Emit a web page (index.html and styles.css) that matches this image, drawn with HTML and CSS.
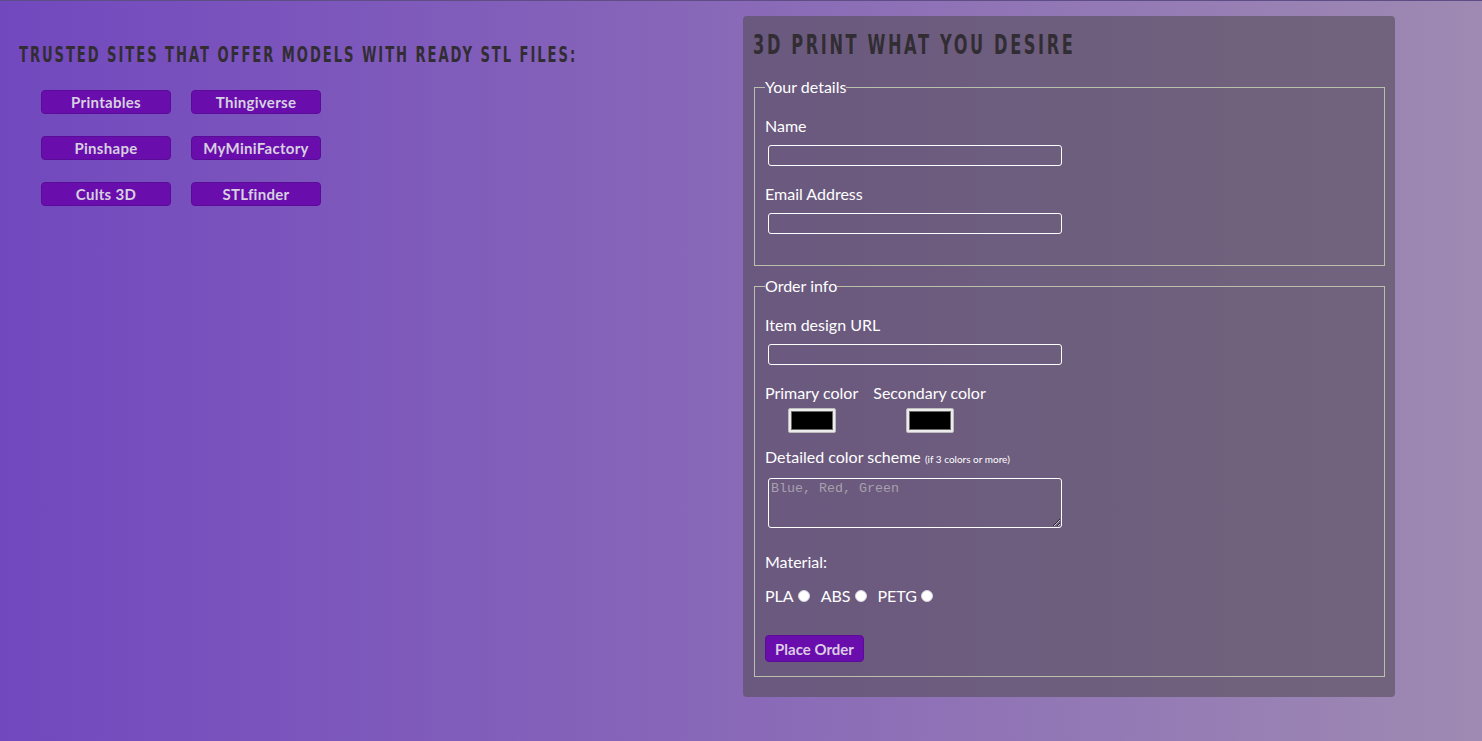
FILE: index.html
```html
<!DOCTYPE html>
<html lang="en">
<head>
<meta charset="utf-8">
<title>3D Print What You Desire</title>
<link rel="stylesheet" href="styles.css">
</head>
<body>
  <main class="page">
    <section class="sites">
      <h2 class="sites-title">Trusted sites that offer models with ready STL files:</h2>
      <nav class="site-grid">
        <a class="site-btn" href="#">Printables</a>
        <a class="site-btn" href="#">Thingiverse</a>
        <a class="site-btn" href="#">Pinshape</a>
        <a class="site-btn" href="#">MyMiniFactory</a>
        <a class="site-btn" href="#">Cults 3D</a>
        <a class="site-btn" href="#">STLfinder</a>
      </nav>
    </section>
    <section class="order-wrap">
      <form class="panel">
        <h1 class="panel-title">3D Print what you desire</h1>
        <fieldset class="group group-details">
          <legend>Your details</legend>
          <label class="lbl" for="name">Name</label>
          <input class="txt" id="name" type="text">
          <label class="lbl" for="email">Email Address</label>
          <input class="txt" id="email" type="email">
        </fieldset>
        <fieldset class="group group-order">
          <legend>Order info</legend>
          <label class="lbl" for="url">Item design URL</label>
          <input class="txt" id="url" type="url">
          <div class="colors">
            <div class="color-col">
              <label class="lbl-inline" for="c1">Primary color</label>
              <input class="swatch" id="c1" type="color" value="#000000">
            </div>
            <div class="color-col">
              <label class="lbl-inline" for="c2">Secondary color</label>
              <input class="swatch" id="c2" type="color" value="#000000">
            </div>
          </div>
          <label class="lbl lbl-scheme" for="scheme">Detailed color scheme <small class="hint">(if 3 colors or more)</small></label>
          <textarea class="area" id="scheme" placeholder="Blue, Red, Green"></textarea>
          <div class="lbl lbl-material">Material:</div>
          <div class="radios">
            <label class="radio">PLA <input type="radio" name="mat" class="dot"></label>
            <label class="radio">ABS <input type="radio" name="mat" class="dot"></label>
            <label class="radio">PETG <input type="radio" name="mat" class="dot"></label>
          </div>
          <button type="button" class="submit">Place Order</button>
        </fieldset>
      </form>
    </section>
  </main>
</body>
</html>
```
FILE: styles.css
```css
html, body {
  margin: 0;
  padding: 0;
}
body {
  min-height: 100vh;
  background: linear-gradient(to right, #7248bf 0%, #8969b8 50%, #9e8ab2 100%);
  border-top: 1px solid #5f4d86;
  box-sizing: border-box;
  font-family: Lato, "Open Sans", sans-serif;
  color: #ffffff;
}
.page {
  display: flex;
}
.sites {
  width: 741px;
  flex: none;
  padding-left: 19px;
  box-sizing: border-box;
}
.sites-title {
  margin: 40px 0 0;
  font-family: "DejaVu Sans", sans-serif;
  font-weight: bold;
  font-size: 22px;
  line-height: 28px;
  letter-spacing: 3.25px;
  text-transform: uppercase;
  color: #312d33;
  white-space: nowrap;
  transform: scaleX(0.597);
  transform-origin: left center;
}
.site-grid {
  display: grid;
  grid-template-columns: 130px 130px;
  column-gap: 20px;
  row-gap: 22px;
  margin: 21px 0 0 22px;
}
.site-btn {
  display: block;
  height: 24px;
  box-sizing: border-box;
  line-height: 22px;
  text-align: center;
  background: #6a0dad;
  border: 1px solid #5a0c98;
  border-radius: 4px;
  color: #d6d0e0;
  font-weight: bold;
  font-size: 15px;
  letter-spacing: 0.3px;
  text-decoration: none;
}
.order-wrap {
  padding-top: 15px;
  padding-left: 2px;
}
.panel {
  width: 652px;
  box-sizing: border-box;
  padding: 11px 10px 20px 11px;
  background: rgba(89, 79, 94, 0.63);
  border-radius: 4px;
}
.panel-title {
  margin: 0 0 14px -1px;
  font-family: "DejaVu Sans", sans-serif;
  font-weight: bold;
  font-size: 27px;
  line-height: 36px;
  letter-spacing: 4.35px;
  text-transform: uppercase;
  color: #312d33;
  white-space: nowrap;
  transform: scaleX(0.6);
  transform-origin: left center;
}
.group {
  margin: 0;
  padding: 0 10px;
  border: 1px solid #b9c0ab;
  min-width: 0;
}
.group legend {
  padding: 0;
  font-size: 16px;
  line-height: 20px;
}
.group-details {
  padding-bottom: 31px;
}
.group-order {
  margin-top: 10px;
  padding-bottom: 14px;
}
.lbl {
  display: block;
  margin-top: 19px;
  font-size: 16px;
  line-height: 20px;
}
.txt + .lbl {
  margin-top: 18px;
}
.txt {
  display: block;
  margin: 9px 0 0 3px;
  width: 294px;
  height: 21px;
  box-sizing: border-box;
  background: transparent;
  border: 1px solid #ffffff;
  border-radius: 3px;
  color: #fff;
  padding: 1px 3px;
}
.colors {
  display: flex;
  gap: 15px;
  margin-top: 18px;
}
.color-col {
  display: flex;
  flex-direction: column;
  align-items: center;
}
.lbl-inline {
  font-size: 16px;
  line-height: 20px;
}
.swatch {
  margin: 5px 0 0;
  width: 48px;
  height: 25px;
  box-sizing: border-box;
  padding: 0;
  border: 1px solid #bdbdbd;
  border-radius: 2px;
  background: #ececec;
}
.swatch::-webkit-color-swatch-wrapper {
  padding: 2px;
}
.swatch::-webkit-color-swatch {
  border: 1px solid #6a6a6a;
  border-radius: 0;
}
.lbl-scheme {
  margin-top: 14px;
  height: 20px;
}
.hint {
  font-size: 10px;
  line-height: 0;
}
.area {
  display: block;
  margin: 11px 0 0 3px;
  width: 294px;
  height: 50px;
  box-sizing: border-box;
  background: transparent;
  border: 1px solid #ffffff;
  border-radius: 3px;
  padding: 2px;
  font-family: "Liberation Mono", monospace;
  font-size: 13.33px;
  color: #fff;
  resize: vertical;
}
.area::placeholder {
  color: #a7a0ae;
}
.lbl-material {
  margin-top: 24px;
}
.radios {
  display: flex;
  gap: 11px;
  margin-top: 14px;
  font-size: 16px;
  line-height: 20px;
}
.radio {
  display: flex;
  align-items: center;
  gap: 4px;
}
.dot {
  appearance: none;
  -webkit-appearance: none;
  margin: 0;
  width: 12px;
  height: 12px;
  border-radius: 50%;
  background: #ffffff;
  border: 1px solid #d8d2de;
}
.submit {
  display: block;
  margin-top: 29px;
  width: 99px;
  height: 27px;
  padding: 0;
  background: #6a0dad;
  border: 1px solid #5a0c98;
  border-radius: 4px;
  color: #dccbe6;
  font-family: Lato, "Open Sans", sans-serif;
  font-weight: bold;
  font-size: 15px;
}
```
